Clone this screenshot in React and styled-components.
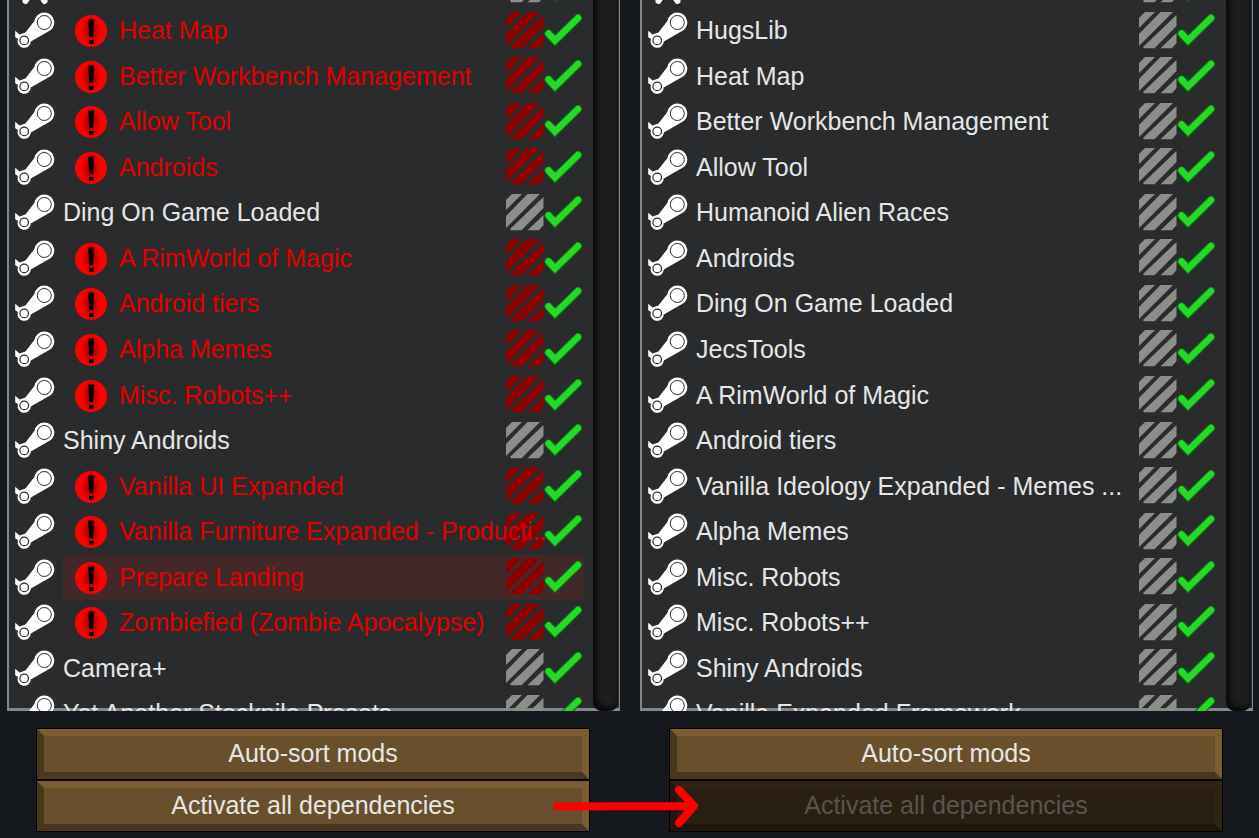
import React from 'react';
import styled, { createGlobalStyle, css } from 'styled-components';

const GlobalStyle = createGlobalStyle`
  *, *::before, *::after { box-sizing: border-box; }
  body {
    margin: 0;
    background: #15181d;
    font-family: "Liberation Sans", Arial, sans-serif;
    font-size: 25px;
    color: #e6e6e6;
  }
`;

const Page = styled.main`
  display: grid;
  grid-template-columns: repeat(2, minmax(0, 1fr));
  gap: 20px;
  height: 100vh;
  padding: 0 6px 7px 7px;
  overflow: hidden;
`;

const Column = styled.section`
  display: flex;
  flex-direction: column;
  gap: 18px;
  min-width: 0;
  min-height: 0;
`;

const Panel = styled.div`
  flex: 1;
  min-height: 0;
  display: flex;
  overflow: hidden;
  padding: 0 2px;
  background: #2a2b2c;
  box-shadow: inset 2px 0 #868686, inset -1px 0 #868686, inset 0 -3px #868686;
`;

const List = styled.ul`
  flex: 1;
  min-width: 0;
  height: 774px;
  margin: -37px 0 0;
  padding: 0 9px 0 6px;
  list-style: none;
  display: grid;
  grid-template-columns: minmax(0, 1fr);
  grid-auto-rows: 1fr;
`;

const Row = styled.li`
  display: flex;
  align-items: center;
  gap: 8px;
  min-width: 0;
  min-height: 0;
`;

const Entry = styled.div`
  flex: 1;
  min-width: 0;
  height: 100%;
  display: flex;
  align-items: center;
  background: ${(p) => (p.$highlight ? '#422829' : 'transparent')};
`;

const Name = styled.span`
  flex: 1;
  min-width: 0;
  position: relative;
  z-index: 1;
  padding-bottom: 2px;
  white-space: nowrap;
  line-height: 30px;
  color: ${(p) => (p.$error ? '#e00000' : '#e6e6e6')};
`;

const Glyph = styled.svg`
  display: block;
  flex: none;
`;

const AlertGlyph = styled(Glyph)`
  margin: 0 12px;
`;

const TickGlyph = styled(Glyph)`
  position: relative;
  z-index: 2;
`;

const Scrollbar = styled.div`
  width: 25px;
  flex: none;
  border-radius: 0 0 9px 9px;
  background: #1c1e1d;
  box-shadow: inset 4px -4px 4px #0b0b0b, inset -2px 0 2px #151515;
`;

const Actions = styled.div`
  position: relative;
  display: flex;
  flex-direction: column;
  gap: 2px;
  margin: 0 31px 0 30px;
`;

const Button = styled.button`
  height: 50px;
  padding: 0 0 2px;
  border: 7px solid;
  border-color: #7b5d31 #7b5d31 #493820 #493820;
  background: #68502d;
  box-shadow: 0 0 0 1px #000, inset 0 0 1px #5a4527;
  font: inherit;
  line-height: 30px;
  color: #e6e6e6;
  ${(p) =>
    p.disabled &&
    css`
      border-color: #302414 #302414 #20170d #20170d;
      background: #291f12;
      box-shadow: 0 0 0 1px #000;
      color: #58554f;
    `}
`;

const ArrowMark = styled.svg`
  position: absolute;
  left: -118px;
  bottom: 2px;
`;

function SteamIcon() {
  return (
    <Glyph width="40" height="38" viewBox="0 0 40 38" role="img" aria-label="Steam Workshop">
      <path
        fill="#fff"
        d="M.2 18.8 4.6 22.4 10.4 20.6 19.4 9A10 10 0 1 1 32.4 20L15.8 29.4A6.6 6.6 0 1 1 3 27L.2 25.2Z"
      />
      <circle cx="29.3" cy="10.5" r="7" fill="#fff" stroke="#2a2b2c" strokeWidth="1" />
      <circle cx="9.2" cy="28.4" r="4.3" fill="#fff" stroke="#2a2b2c" strokeWidth="1.2" />
    </Glyph>
  );
}

function LocalIcon() {
  return (
    <Glyph width="40" height="38" viewBox="0 0 40 38" aria-hidden="true">
      <path d="M10.5 34 20 18 29.5 34" fill="none" stroke="#fff" strokeWidth="6" strokeLinecap="round" />
    </Glyph>
  );
}

function AlertIcon() {
  return (
    <AlertGlyph width="32" height="32" viewBox="0 0 32 32" role="img" aria-label="Missing dependency">
      <defs>
        <radialGradient id="alertShade" gradientTransform="translate(.2 0) scale(.6 1)">
          <stop offset=".15" stopColor="#a00000" />
          <stop offset="1" stopColor="#f00" />
        </radialGradient>
      </defs>
      <circle cx="16" cy="16" r="16" fill="url(#alertShade)" />
      <path d="M13 4.5h6.2L18 22h-3.6ZM14 25h4.5v4H14Z" fill="#080000" />
    </AlertGlyph>
  );
}

function StripesIcon({ error }) {
  return (
    <Glyph width="38" height="39" viewBox="0 0 38 39" aria-hidden="true">
      <path
        fill={error ? '#8e0000' : '#8c8e8a'}
        d="M6 0H16L0 16V6ZM21.5 0H34L0 34V22ZM37.5 3V14L15.5 36.3H5L4 35ZM37.5 21V31L33 36.3H21.5Z"
      />
    </Glyph>
  );
}

function TickIcon() {
  return (
    <TickGlyph width="40" height="36" viewBox="0 0 40 36" role="img" aria-label="Compatible">
      <path
        d="M4.5 20.5 11 27.5 34 5"
        fill="none"
        stroke="#126a14"
        strokeWidth="8.6"
        strokeLinecap="round"
      />
      <path d="M4.5 20.5 11 27.5 34 5" fill="none" stroke="#25d928" strokeWidth="6.4" strokeLinecap="round" />
    </TickGlyph>
  );
}

function ModRow({ name, error, highlight, local }) {
  return (
    <Row>
      {local ? <LocalIcon /> : <SteamIcon />}
      <Entry $highlight={highlight}>
        {error && <AlertIcon />}
        <Name $error={error}>{name}</Name>
        <StripesIcon error={error} />
        <TickIcon />
      </Entry>
    </Row>
  );
}

const before = [
  { local: true },
  { name: 'Heat Map', error: true },
  { name: 'Better Workbench Management', error: true },
  { name: 'Allow Tool', error: true },
  { name: 'Androids', error: true },
  { name: 'Ding On Game Loaded' },
  { name: 'A RimWorld of Magic', error: true },
  { name: 'Android tiers', error: true },
  { name: 'Alpha Memes', error: true },
  { name: 'Misc. Robots++', error: true },
  { name: 'Shiny Androids' },
  { name: 'Vanilla UI Expanded', error: true },
  { name: 'Vanilla Furniture Expanded - Producti...', error: true },
  { name: 'Prepare Landing', error: true, highlight: true },
  { name: 'Zombiefied (Zombie Apocalypse)', error: true },
  { name: 'Camera+' },
  { name: 'Yet Another Stockpile Presets' },
];

const after = [
  { local: true },
  { name: 'HugsLib' },
  { name: 'Heat Map' },
  { name: 'Better Workbench Management' },
  { name: 'Allow Tool' },
  { name: 'Humanoid Alien Races' },
  { name: 'Androids' },
  { name: 'Ding On Game Loaded' },
  { name: 'JecsTools' },
  { name: 'A RimWorld of Magic' },
  { name: 'Android tiers' },
  { name: 'Vanilla Ideology Expanded - Memes ...' },
  { name: 'Alpha Memes' },
  { name: 'Misc. Robots' },
  { name: 'Misc. Robots++' },
  { name: 'Shiny Androids' },
  { name: 'Vanilla Expanded Framework' },
];

function ModColumn({ mods, resolved }) {
  return (
    <Column>
      <Panel>
        <List>
          {mods.map((mod, i) => (
            <ModRow key={i} {...mod} />
          ))}
        </List>
        <Scrollbar />
      </Panel>
      <Actions>
        <Button type="button">Auto-sort mods</Button>
        <Button type="button" disabled={resolved}>
          Activate all dependencies
        </Button>
        {resolved && (
          <ArrowMark width="148" height="46" viewBox="0 0 148 46" aria-hidden="true">
            <path
              d="M5 23.5 140 23M127 7 142 23 127 40"
              fill="none"
              stroke="#f00"
              strokeWidth="8"
              strokeLinecap="round"
              strokeLinejoin="round"
            />
          </ArrowMark>
        )}
      </Actions>
    </Column>
  );
}

export default function App() {
  return (
    <>
      <GlobalStyle />
      <Page>
        <ModColumn mods={before} />
        <ModColumn mods={after} resolved />
      </Page>
    </>
  );
}
